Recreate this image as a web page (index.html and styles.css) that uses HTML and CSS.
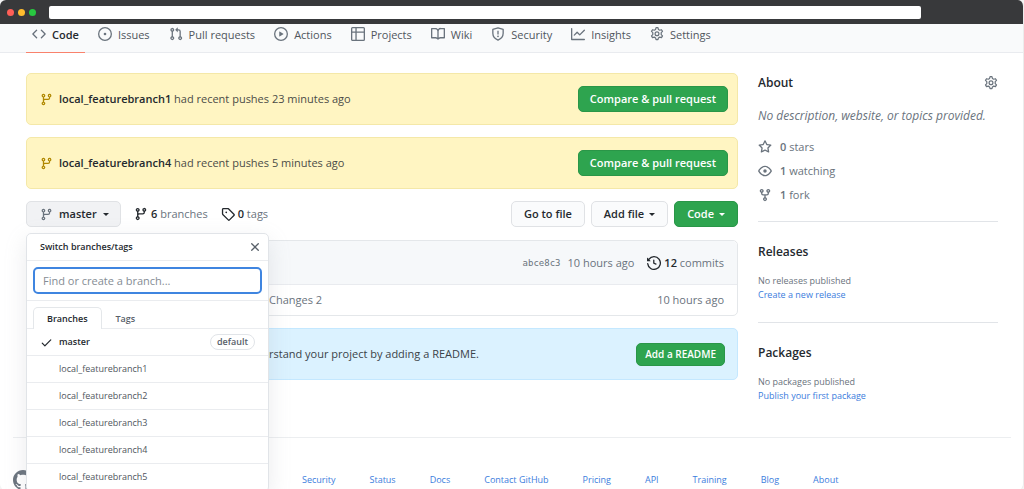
FILE: index.html
```html
<!DOCTYPE html>
<html lang="en">
<head>
<meta charset="utf-8">
<meta name="viewport" content="width=device-width, initial-scale=1">
<title>Code</title>
<link rel="stylesheet" href="styles.css">
</head>
<body>
<svg class="sprite" aria-hidden="true">
  <symbol id="i-code" viewBox="0 0 16 16"><path d="M4.72 3.22a.75.75 0 011.06 1.06L2.06 8l3.72 3.72a.75.75 0 11-1.06 1.06L.47 8.53a.75.75 0 010-1.06l4.25-4.25zm6.56 0a.75.75 0 10-1.06 1.06L13.94 8l-3.72 3.72a.75.75 0 101.06 1.06l4.25-4.25a.75.75 0 000-1.06l-4.25-4.25z"/></symbol>
  <symbol id="i-issue" viewBox="0 0 16 16"><path d="M8 9.5a1.5 1.5 0 100-3 1.5 1.5 0 000 3z"/><path fill-rule="evenodd" d="M8 0a8 8 0 100 16A8 8 0 008 0zM1.5 8a6.5 6.5 0 1113 0 6.5 6.5 0 01-13 0z"/></symbol>
  <symbol id="i-pull" viewBox="0 0 16 16"><path fill-rule="evenodd" d="M7.177 3.073L9.573.677A.25.25 0 0110 .854v4.792a.25.25 0 01-.427.177L7.177 3.427a.25.25 0 010-.354zM3.75 2.5a.75.75 0 100 1.5.75.75 0 000-1.5zm-2.25.75a2.25 2.25 0 113 2.122v5.256a2.251 2.251 0 11-1.5 0V5.372A2.25 2.25 0 011.5 3.25zM11 2.5h-1V4h1a1 1 0 011 1v5.628a2.251 2.251 0 101.5 0V5A2.5 2.5 0 0011 2.5zm1 10.25a.75.75 0 111.5 0 .75.75 0 01-1.5 0zM3.75 12a.75.75 0 100 1.5.75.75 0 000-1.5z"/></symbol>
  <symbol id="i-play" viewBox="0 0 16 16"><path fill-rule="evenodd" d="M1.5 8a6.5 6.5 0 1113 0 6.5 6.5 0 01-13 0zM8 0a8 8 0 100 16A8 8 0 008 0zM6.379 5.227A.25.25 0 006 5.442v5.117a.25.25 0 00.379.214l4.264-2.559a.25.25 0 000-.428L6.379 5.227z"/></symbol>
  <symbol id="i-project" viewBox="0 0 16 16"><path fill-rule="evenodd" d="M1.75 0A1.75 1.75 0 000 1.75v12.5C0 15.216.784 16 1.75 16h12.5A1.75 1.75 0 0016 14.25V1.75A1.75 1.75 0 0014.25 0H1.75zM1.5 1.75a.25.25 0 01.25-.25H5V5H1.5V1.75zM6.5 1.5h7.75a.25.25 0 01.25.25V5h-8V1.5zM6.5 6.5h8v7.75a.25.25 0 01-.25.25H6.5v-8zM5 6.5v8H1.75a.25.25 0 01-.25-.25V6.5H5z"/></symbol>
  <symbol id="i-book" viewBox="0 0 16 16"><path fill-rule="evenodd" d="M0 1.75A.75.75 0 01.75 1h4.253c1.227 0 2.317.59 3 1.501A3.744 3.744 0 0111.006 1h4.245a.75.75 0 01.75.75v10.5a.75.75 0 01-.75.75h-4.507a2.25 2.25 0 00-1.591.659l-.622.621a.75.75 0 01-1.06 0l-.622-.621A2.25 2.25 0 005.258 13H.75a.75.75 0 01-.75-.75V1.75zm8.755 3a2.25 2.25 0 012.25-2.25H14.5v9h-3.757c-.71 0-1.4.201-1.992.572l.004-7.322zm-1.504 7.324l.004-5.073-.002-2.253A2.25 2.25 0 005.003 2.5H1.5v9h3.757a3.75 3.75 0 011.994.574z"/></symbol>
  <symbol id="i-shield" viewBox="0 0 16 16"><path fill="none" stroke="currentColor" stroke-width="1.5" stroke-linejoin="round" d="M8 .9l5.9 1.9v4.4c0 3.4-2.100 6.200-5.900 7.900C4.200 13.400 2.100 10.600 2.100 7.200V2.800z"/><path d="M7.250 4.200h1.500v4.300h-1.500z"/><circle cx="8" cy="10.600" r="1"/></symbol>
  <symbol id="i-graph" viewBox="0 0 16 16"><path fill-rule="evenodd" d="M1.500 1.750a.75.75 0 00-1.500 0v12.500c0 .414.336.75.75.75h14.500a.75.75 0 000-1.500H1.500V1.750zm14.280 2.530a.75.75 0 00-1.060-1.060L10 7.940 7.530 5.470a.75.75 0 00-1.060 0L3.220 8.720a.75.75 0 001.060 1.060L7 7.060l2.470 2.470a.75.75 0 001.060 0l5.250-5.250z"/></symbol>
  <symbol id="i-gear" viewBox="0 0 16 16"><path fill="none" stroke="currentColor" stroke-width="1.400" stroke-linejoin="round" d="M6.900.8h2.200l.5 2 1.500.9 2-.6 1.200 1.900-1.500 1.500v2.200l1.500 1.500-1.200 2-2-.6-1.500.9-.5 2H6.900l-.5-2-1.500-.9-2 .6-1.200-2 1.500-1.500V6.500L1.700 5l1.200-1.900 2 .6 1.500-.9z"/><circle cx="8" cy="7.700" r="2.200" fill="none" stroke="currentColor" stroke-width="1.400"/></symbol>
  <symbol id="i-branch" viewBox="0 0 16 16"><path fill-rule="evenodd" d="M11.750 2.500a.75.75 0 100 1.500.75.75 0 000-1.500zm-2.250.75a2.250 2.250 0 113 2.122V6A2.500 2.500 0 0110 8.500H6a1 1 0 00-1 1v1.128a2.251 2.251 0 11-1.500 0V5.372a2.250 2.250 0 111.500 0v1.836A2.492 2.492 0 016 7h4a1 1 0 001-1v-.628A2.250 2.250 0 019.500 3.250zM4.250 12a.75.75 0 100 1.500.75.75 0 000-1.500zM3.500 3.250a.75.75 0 111.500 0 .75.75 0 01-1.500 0z"/></symbol>
  <symbol id="i-tag" viewBox="0 0 16 16"><path fill-rule="evenodd" d="M2.500 7.775V2.750a.25.25 0 01.25-.25h5.025a.25.25 0 01.177.073l6.250 6.250a.25.25 0 010 .354l-5.025 5.025a.25.25 0 01-.354 0l-6.250-6.250a.25.25 0 01-.073-.177zm-1.500 0V2.750C1 1.784 1.784 1 2.750 1h5.025c.464 0 .91.184 1.238.513l6.250 6.250a1.750 1.750 0 010 2.474l-5.026 5.026a1.750 1.750 0 01-2.474 0l-6.250-6.250A1.750 1.750 0 011 7.775zM6 5a1 1 0 100 2 1 1 0 000-2z"/></symbol>
  <symbol id="i-history" viewBox="0 0 16 16"><path fill-rule="evenodd" d="M1.643 3.143L.427 1.927A.25.25 0 000 2.104V5.750c0 .138.112.25.25.25h3.646a.25.25 0 00.177-.427L2.715 4.215a6.500 6.500 0 11-1.180 4.458.75.75 0 10-1.493.154 8.001 8.001 0 101.600-5.684zM7.750 4a.75.75 0 01.75.75v2.992l2.028.812a.75.75 0 01-.557 1.392l-2.500-1A.75.75 0 017 8.250v-3.500A.75.75 0 017.750 4z"/></symbol>
  <symbol id="i-star" viewBox="0 0 16 16"><path fill-rule="evenodd" d="M8 .25a.75.75 0 01.673.418l1.882 3.815 4.210.612a.75.75 0 01.416 1.279l-3.046 2.970.719 4.192a.75.75 0 01-1.088.791L8 12.347l-3.766 1.980a.75.75 0 01-1.088-.790l.72-4.194L.818 6.374a.75.75 0 01.416-1.280l4.210-.611L7.327.668A.75.75 0 018 .25zm0 2.445L6.615 5.500a.75.75 0 01-.564.410l-3.097.450 2.240 2.184a.75.75 0 01.216.664l-.528 3.084 2.769-1.456a.75.75 0 01.698 0l2.770 1.456-.530-3.084a.75.75 0 01.216-.664l2.240-2.183-3.096-.450a.75.75 0 01-.564-.410L8 2.694z"/></symbol>
  <symbol id="i-eye" viewBox="0 0 16 16"><path fill-rule="evenodd" d="M1.679 7.932c.412-.621 1.242-1.750 2.366-2.717C5.175 4.242 6.527 3.500 8 3.500c1.473 0 2.824.742 3.955 1.715 1.124.967 1.954 2.096 2.366 2.717a.119.119 0 010 .136c-.412.621-1.242 1.750-2.366 2.717C10.825 11.758 9.473 12.500 8 12.500c-1.473 0-2.824-.742-3.955-1.715C2.920 9.818 2.090 8.690 1.679 8.068a.119.119 0 010-.136zM8 2c-1.981 0-3.670.992-4.933 2.078C1.797 5.169.88 6.423.430 7.100a1.619 1.619 0 000 1.798c.450.678 1.367 1.932 2.637 3.024C4.329 13.008 6.019 14 8 14c1.981 0 3.670-.992 4.933-2.078 1.270-1.091 2.187-2.345 2.637-3.023a1.619 1.619 0 000-1.798c-.450-.678-1.367-1.932-2.637-3.023C11.671 2.992 9.981 2 8 2zm0 8a2 2 0 100-4 2 2 0 000 4z"/></symbol>
  <symbol id="i-fork" viewBox="0 0 16 16"><path fill-rule="evenodd" d="M5 3.250a.75.75 0 11-1.500 0 .75.75 0 011.500 0zm0 2.122a2.250 2.250 0 10-1.500 0v.878A2.250 2.250 0 005.750 8.500h1.500v2.128a2.251 2.251 0 101.500 0V8.500h1.500a2.250 2.250 0 002.250-2.250v-.878a2.250 2.250 0 10-1.500 0v.878a.75.75 0 01-.75.75h-4.500A.75.75 0 015 6.250v-.878zm3.750 7.378a.75.75 0 11-1.500 0 .75.75 0 011.500 0zm3-8.750a.75.75 0 100-1.500.75.75 0 000 1.500z"/></symbol>
  <symbol id="i-check" viewBox="0 0 16 16"><path d="M13.780 4.220a.75.75 0 010 1.060l-7.250 7.250a.75.75 0 01-1.060 0L2.220 9.280a.75.75 0 011.060-1.060L6 10.940l6.720-6.720a.75.75 0 011.060 0z"/></symbol>
  <symbol id="i-x" viewBox="0 0 16 16"><path d="M3.720 3.720a.75.75 0 011.060 0L8 6.940l3.220-3.220a.75.75 0 111.060 1.060L9.060 8l3.220 3.220a.75.75 0 11-1.060 1.060L8 9.060l-3.220 3.220a.75.75 0 01-1.060-1.060L6.940 8 3.720 4.780a.75.75 0 010-1.060z"/></symbol>
  <symbol id="i-mark" viewBox="0 0 16 16"><path d="M8 0C3.580 0 0 3.580 0 8c0 3.540 2.290 6.530 5.470 7.590.4.070.55-.17.55-.38 0-.19-.01-.82-.01-1.490-2.010.37-2.530-.49-2.690-.94-.09-.23-.48-.94-.82-1.130-.28-.15-.68-.52-.01-.53.63-.01 1.080.58 1.230.82.72 1.210 1.870.87 2.330.66.07-.52.28-.87.51-1.070-1.780-.2-3.640-.89-3.640-3.950 0-.87.31-1.590.82-2.150-.08-.2-.36-1.020.08-2.120 0 0 .67-.21 2.200.82.64-.18 1.320-.27 2-.27.68 0 1.360.09 2 .27 1.530-1.040 2.200-.82 2.200-.82.44 1.100.16 1.920.08 2.120.51.56.82 1.270.82 2.150 0 3.070-1.870 3.750-3.650 3.950.29.25.54.73.54 1.480 0 1.070-.01 1.930-.01 2.200 0 .21.15.46.55.38A8.013 8.013 0 0016 8c0-4.420-3.580-8-8-8z"/></symbol>
</svg>

<div class="window">
  <header class="chrome">
    <span class="dot dot-red"></span><span class="dot dot-amber"></span><span class="dot dot-green"></span>
    <input class="address" type="text" aria-label="Address">
  </header>

  <nav class="tabs" aria-label="Repository">
    <a class="tab tab-current" href="#"><svg class="icon"><use href="#i-code"/></svg>Code</a>
    <a class="tab" href="#"><svg class="icon"><use href="#i-issue"/></svg>Issues</a>
    <a class="tab" href="#"><svg class="icon"><use href="#i-pull"/></svg>Pull requests</a>
    <a class="tab" href="#"><svg class="icon"><use href="#i-play"/></svg>Actions</a>
    <a class="tab" href="#"><svg class="icon"><use href="#i-project"/></svg>Projects</a>
    <a class="tab" href="#"><svg class="icon"><use href="#i-book"/></svg>Wiki</a>
    <a class="tab" href="#"><svg class="icon"><use href="#i-shield"/></svg>Security</a>
    <a class="tab" href="#"><svg class="icon"><use href="#i-graph"/></svg>Insights</a>
    <a class="tab" href="#"><svg class="icon"><use href="#i-gear"/></svg>Settings</a>
  </nav>

  <div class="layout">
    <main class="main">
      <section class="notice">
        <svg class="icon"><use href="#i-branch"/></svg>
        <p class="notice-text"><strong>local_featurebranch1</strong> had recent pushes 23 minutes ago</p>
        <button class="btn btn-primary" type="button">Compare &amp; pull request</button>
      </section>
      <section class="notice">
        <svg class="icon"><use href="#i-branch"/></svg>
        <p class="notice-text"><strong>local_featurebranch4</strong> had recent pushes 5 minutes ago</p>
        <button class="btn btn-primary" type="button">Compare &amp; pull request</button>
      </section>

      <div class="toolbar">
        <div class="switcher">
          <button class="btn btn-branch" type="button" aria-expanded="true"><svg class="icon"><use href="#i-branch"/></svg>master<span class="caret"></span></button>
          <div class="menu">
            <div class="menu-head">
              <strong>Switch branches/tags</strong>
              <button class="close" type="button" aria-label="Close"><svg class="icon"><use href="#i-x"/></svg></button>
            </div>
            <div class="menu-search"><input class="search" type="text" placeholder="Find or create a branch..." aria-label="Find or create a branch"></div>
            <div class="menu-tabs">
              <button class="menu-tab menu-tab-current" type="button">Branches</button>
              <button class="menu-tab" type="button">Tags</button>
            </div>
            <ul class="branches">
              <li><a class="branch branch-current" href="#"><svg class="icon"><use href="#i-check"/></svg><span>master</span><span class="label">default</span></a></li>
              <li><a class="branch" href="#">local_featurebranch1</a></li>
              <li><a class="branch" href="#">local_featurebranch2</a></li>
              <li><a class="branch" href="#">local_featurebranch3</a></li>
              <li><a class="branch" href="#">local_featurebranch4</a></li>
              <li><a class="branch" href="#">local_featurebranch5</a></li>
            </ul>
          </div>
        </div>
        <a class="count" href="#"><svg class="icon"><use href="#i-branch"/></svg><span><strong>6</strong> branches</span></a>
        <a class="count" href="#"><svg class="icon"><use href="#i-tag"/></svg><span><strong>0</strong> tags</span></a>
        <div class="actions">
          <button class="btn" type="button">Go to file</button>
          <button class="btn" type="button">Add file<span class="caret"></span></button>
          <button class="btn btn-primary" type="button">Code<span class="caret"></span></button>
        </div>
      </div>

      <section class="files">
        <div class="commit">
          <a class="sha" href="#">abce8c3</a>
          <span>10 hours ago</span>
          <a class="count commits" href="#"><svg class="icon"><use href="#i-history"/></svg><span><strong>12</strong> commits</span></a>
        </div>
        <div class="file">
          <span>Changes 2</span>
          <span>10 hours ago</span>
        </div>
      </section>

      <section class="readme">
        <span>rstand your project by adding a README.</span>
        <button class="btn btn-primary btn-small" type="button">Add a README</button>
      </section>
    </main>

    <aside class="sidebar">
      <section class="panel">
        <div class="panel-head"><h2>About</h2><a class="gear" href="#" aria-label="Edit details"><svg class="icon"><use href="#i-gear"/></svg></a></div>
        <p class="blurb">No description, website, or topics provided.</p>
        <ul class="stats">
          <li><svg class="icon"><use href="#i-star"/></svg><span><strong>0</strong> stars</span></li>
          <li><svg class="icon"><use href="#i-eye"/></svg><span><strong>1</strong> watching</span></li>
          <li><svg class="icon"><use href="#i-fork"/></svg><span><strong>1</strong> fork</span></li>
        </ul>
      </section>
      <section class="panel">
        <h2>Releases</h2>
        <p class="note">No releases published<br><a href="#">Create a new release</a></p>
      </section>
      <section class="panel">
        <h2>Packages</h2>
        <p class="note">No packages published<br><a href="#">Publish your first package</a></p>
      </section>
    </aside>
  </div>

  <footer class="footer">
    <svg class="mark"><use href="#i-mark"/></svg>
    <nav class="footer-links" aria-label="Footer">
      <a href="#">Security</a><a href="#">Status</a><a href="#">Docs</a><a href="#">Contact GitHub</a><a href="#">Pricing</a><a href="#">API</a><a href="#">Training</a><a href="#">Blog</a><a href="#">About</a>
    </nav>
  </footer>
</div>
</body>
</html>
```

FILE: styles.css
```css
* { box-sizing: border-box; }

body {
  margin: 0;
  background: #f4f4f4;
  color: #24292e;
  font: 11px/18px "Segoe UI", "Open Sans", "Noto Sans", sans-serif;
}

h2, p, ul { margin: 0; padding: 0; }
ul { list-style: none; }
a { color: #3b7ddd; text-decoration: none; }
strong, h2 { font-weight: 600; }
button, input { font: inherit; color: inherit; }

.sprite { display: none; }
.icon { width: 14px; height: 14px; flex: none; fill: currentColor; }

.window {
  min-height: 100vh;
  overflow: hidden;
  background: #fff;
  border-right: 1px solid #ececec;
  border-radius: 6px;
}

.chrome {
  display: flex;
  align-items: center;
  gap: 4px;
  height: 24px;
  padding: 0 102px 0 7px;
  background: #38393b;
}
.dot { width: 7px; height: 7px; border-radius: 50%; flex: none; }
.dot-red { background: #ff5f57; }
.dot-amber { background: #febc2e; }
.dot-green { background: #28c840; }
.address {
  flex: 1;
  min-width: 0;
  height: 13px;
  margin-left: 9px;
  padding: 0 6px;
  border: 0;
  border-radius: 2px;
  background: #fff;
}

.tabs {
  display: flex;
  gap: 7px;
  height: 29px;
  padding-left: 26px;
  background: #f9fafb;
  border-bottom: 1px solid #e9ebef;
}
.tab {
  display: flex;
  align-items: flex-start;
  gap: 6px;
  height: 29px;
  padding: 2px 6px 0;
  color: #50565d;
}
.tab .icon { margin-top: 1px; color: #6a737d; }
.tab-current { color: #24292e; font-weight: 600; border-bottom: 1px solid #f9826c; }

.layout {
  display: grid;
  grid-template-columns: minmax(0, 1fr) 240px;
  gap: 20px;
  padding: 20px 25px 0 26px;
}

.notice, .readme {
  display: flex;
  align-items: center;
  min-height: 52px;
  border-radius: 5px;
}
.notice {
  gap: 6px;
  margin-bottom: 12px;
  padding: 0 9px 0 13px;
  background: #fff5c2;
  border: 1px solid #f4e8a8;
}
.notice .icon { width: 13px; height: 13px; color: #b08800; }
.notice-text { flex: 1; color: #4b4c47; }
.notice-text strong { color: #24292e; }

.btn {
  display: inline-flex;
  align-items: center;
  justify-content: center;
  gap: 5px;
  height: 26px;
  padding: 0 12px;
  border: 1px solid #e0e2e5;
  border-radius: 5px;
  background: #fafbfc;
  font-weight: 600;
  white-space: nowrap;
}
.btn-primary { background: #2ea44f; border-color: #2a9648; color: #fff; }
.notice .btn { padding: 0 11px; }
.btn-small { height: 23px; padding: 0 8px; font-size: 10px; }
.btn-branch { justify-content: flex-start; gap: 6px; width: 95px; padding: 0 13px; background: #f1f2f4; }
.btn-branch .icon { width: 13px; height: 13px; color: #6a737d; }
.caret { border: 3px solid transparent; border-top-color: currentColor; border-bottom: 0; }

.toolbar { display: flex; align-items: center; gap: 13px; }
.switcher { position: relative; }
.count { display: flex; align-items: center; gap: 3px; color: #6a737d; }
.count strong, .count .icon { color: #24292e; }
.actions { display: flex; gap: 6px; margin-left: auto; }

.menu {
  position: absolute;
  z-index: 2;
  top: 32px;
  left: 0;
  width: 243px;
  background: #fff;
  border: 1px solid #e1e4e8;
  border-radius: 5px;
  box-shadow: 0 7px 22px rgba(149, 157, 165, 0.2);
  font-size: 9px;
  line-height: 16px;
}
.menu-head {
  display: flex;
  align-items: center;
  justify-content: space-between;
  height: 27px;
  padding: 0 6px 0 13px;
  border-bottom: 1px solid #eaecef;
}
.close { display: flex; padding: 0; border: 0; background: none; color: #586069; }
.menu-search { padding: 6px; border-bottom: 1px solid #eaecef; }
.search {
  display: block;
  width: 100%;
  height: 27px;
  padding: 0 8px;
  border: 2px solid #3f85e0;
  border-radius: 5px;
  background: #fff;
  font-size: 11px;
  outline: 0;
}
.search::placeholder { color: #858c94; }
.menu-tabs { display: flex; padding: 6px 6px 0; border-bottom: 1px solid #eaecef; }
.menu-tab {
  height: 22px;
  margin-bottom: -1px;
  padding: 0 13px;
  border: 1px solid transparent;
  border-bottom: 0;
  border-radius: 5px 5px 0 0;
  background: none;
  color: #586069;
  font-weight: 600;
}
.menu-tab-current { border-color: #e4e7ea; background: #fff; color: #24292e; }
.branch {
  display: flex;
  align-items: center;
  height: 27px;
  padding: 0 13px 0 32px;
  border-bottom: 1px solid #eaecef;
  color: #50565d;
}
.branch-current { gap: 6px; padding-left: 13px; color: #24292e; font-weight: 600; }
.branch .icon { width: 13px; height: 13px; }
.label {
  margin-left: auto;
  padding: 0 6px;
  border: 1px solid #e1e4e8;
  border-radius: 9px;
  color: #586069;
  line-height: 14px;
}

.files { margin: 13px 0 12px; border: 1px solid #e4e7ea; border-radius: 5px; color: #6a737d; }
.commit {
  display: flex;
  align-items: center;
  justify-content: flex-end;
  gap: 7px;
  height: 44px;
  padding: 0 13px;
  background: #f6f8fa;
  border-bottom: 1px solid #e9ebef;
  border-radius: 5px 5px 0 0;
}
.commits { margin-left: 6px; }
.sha { color: #6a737d; font: 9px/16px "DejaVu Sans Mono", monospace; }
.file { display: flex; align-items: center; justify-content: space-between; height: 30px; padding: 0 13px 0 242px; }
.readme {
  justify-content: space-between;
  padding: 0 12px 0 242px;
  background: #dbf2ff;
  border: 1px solid #c4e8ff;
  color: #3a4248;
}

.panel { padding-bottom: 14px; margin-bottom: 20px; border-bottom: 1px solid #e1e4e8; }
.panel:last-child { padding: 0; margin: 0; border: 0; }
.panel-head { display: flex; align-items: center; justify-content: space-between; }
h2 { font-size: 12px; line-height: 20px; }
.gear { display: flex; color: #6a737d; }
.blurb { margin: 13px 0 9px; font-size: 12px; line-height: 20px; font-style: italic; color: #6a737d; white-space: nowrap; }
.stats li { display: flex; align-items: center; gap: 8px; height: 24px; color: #6a737d; }
.note { padding: 12px 0 6px; font-size: 9px; line-height: 14px; color: #6a737d; }

.footer {
  display: flex;
  align-items: flex-start;
  gap: 269px;
  margin: 28px 12px 0 13px;
  padding-top: 32px;
  border-top: 1px solid #eceef0;
}
.mark { width: 20px; height: 20px; flex: none; fill: #6a737d; }
.footer-links { display: flex; gap: 34px; padding-top: 2px; font-size: 9px; line-height: 16px; white-space: nowrap; }
```
